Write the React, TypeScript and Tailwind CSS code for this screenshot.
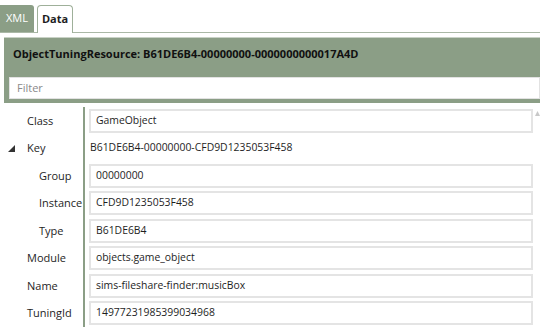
import React from "react";

interface Row {
  label: string;
  value: string;
  input?: boolean;
  indent?: boolean;
  expander?: boolean;
}

const rows: Row[] = [
  { label: "Class", value: "GameObject", input: true },
  { label: "Key", value: "B61DE6B4-00000000-CFD9D1235053F458", expander: true },
  { label: "Group", value: "00000000", input: true, indent: true },
  { label: "Instance", value: "CFD9D1235053F458", input: true, indent: true },
  { label: "Type", value: "B61DE6B4", input: true, indent: true },
  { label: "Module", value: "objects.game_object", input: true },
  { label: "Name", value: "sims-fileshare-finder:musicBox", input: true },
  { label: "TuningId", value: "14977231985399034968", input: true },
];

const App: React.FC = () => {
  return (
    <div
      className="relative w-[540px] h-[332px] bg-white overflow-hidden text-[10.5px] text-[#1e1e1e]"
      style={{ fontFamily: '"Open Sans", "Noto Sans", sans-serif' }}
    >
      {/* tab strip */}
      <div className="flex items-end h-[33px] pt-[5px] border-b border-[#aab8a6] text-[11px]">
        <div className="h-[27px] w-[34px] bg-[#8b9e86] text-white flex items-center justify-center rounded-tr-[3px]">
          XML
        </div>
        <div className="ml-[3px] h-[28px] w-[36px] bg-white border border-b-0 border-[#9fb09a] rounded-t-[4px] font-bold flex items-center justify-center -mb-px">
          Data
        </div>
      </div>

      {/* header */}
      <div className="mt-[4px] ml-[4px] bg-[#8b9e86] border-t border-[#c9d2c6] pb-[4px]">
        <div className="h-[39px] flex items-start pt-[8px] pl-[9px] font-bold text-[11px] text-[#111]">
          ObjectTuningResource: B61DE6B4-00000000-0000000000017A4D
        </div>
        <div className="ml-[5px] h-[22px] bg-white border border-[#e2e2e2] flex items-center pl-[7px] text-[11px] text-[#8a8a8a]">
          Filter
        </div>
      </div>

      {/* property grid */}
      <div className="flex flex-col mt-[4px] text-[11px]">
        {rows.map((row) => (
          <div key={row.label} className="flex h-[27.5px]">
            <div className="w-[85px] flex items-center border-r-2 border-[#8b9e86] shrink-0">
              <span className="w-[27px] flex items-center justify-center">
                {row.expander && (
                  <svg width="7" height="7" viewBox="0 0 7 7" className="ml-[-4px]">
                    <path d="M7 0 L7 7 L0 7 Z" fill="#333" />
                  </svg>
                )}
              </span>
              <span className={row.indent ? "pl-[12px]" : ""}>{row.label}</span>
            </div>
            <div className="flex-1 flex items-center pl-[4px] pr-[7px] text-[10.4px]">
              {row.input ? (
                <div className="w-full h-[24px] border-2 border-[#e4e4e4] flex items-center pl-[5px]">
                  {row.value}
                </div>
              ) : (
                <div className="pl-px">{row.value}</div>
              )}
            </div>
          </div>
        ))}
      </div>
      <svg width="5" height="5" viewBox="0 0 5 5" className="absolute left-[535px] top-[111px]">
        <path d="M2.5 0 L5 5 L0 5 Z" fill="#c8c8c8" />
      </svg>
    </div>
  );
};

export default App;
